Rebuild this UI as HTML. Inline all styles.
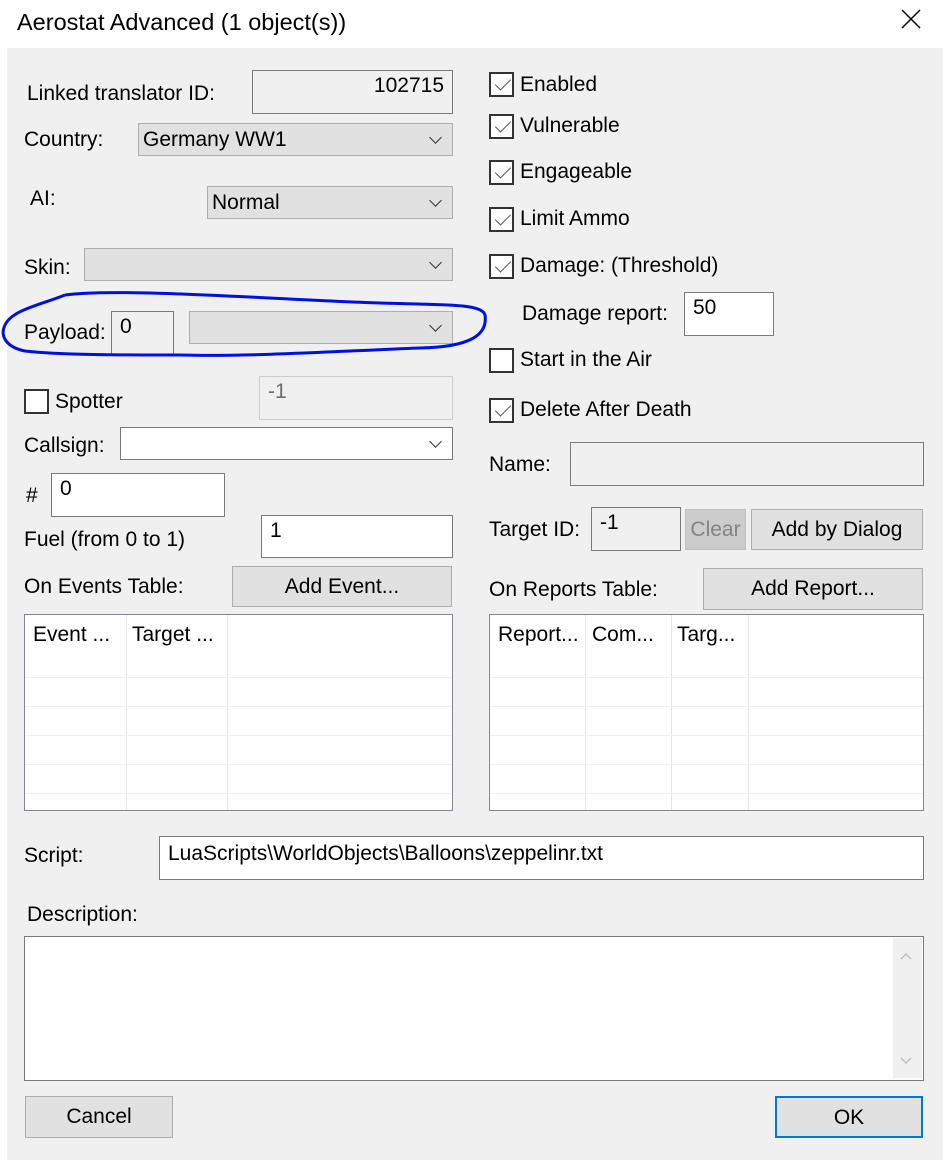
<!DOCTYPE html>
<html><head><meta charset="utf-8"><style>
*{box-sizing:border-box;margin:0;padding:0}
body{width:943px;height:1160px;background:#fff;position:relative;overflow:hidden;font-family:"Liberation Sans",sans-serif;font-size:21px;color:#000}
.p{position:absolute;left:7px;top:48px;width:936px;height:1112px;background:#f0f0f0}
.a{position:absolute}
.l{position:absolute;white-space:nowrap;line-height:24px}
.in{position:absolute;border:1px solid #7a7a7a;background:#fff;padding:4px 8px;line-height:22px}
.cb{position:absolute;border:1px solid #adadad;background:#e1e1e1;padding:1px 4px 0;line-height:30px}
.cb:after{content:"";position:absolute;right:12px;top:9px;width:8px;height:8px;border-right:1.5px solid #333;border-bottom:1.5px solid #333;transform:rotate(45deg)}
.btn{position:absolute;border:1px solid #adadad;background:#e1e1e1;text-align:center;line-height:40px}
.ck{position:absolute;left:489px;width:25px;height:25px;border:2px solid #333;background:#fff}
.ck.on:after{content:"";position:absolute;left:8px;top:1px;width:7px;height:14px;border-right:1.5px solid #555;border-bottom:1.5px solid #555;transform:rotate(45deg)}
.tbl{position:absolute;border:1px solid #828790;background:#fff}
.vl{position:absolute;top:0;bottom:0;width:1px;background:#e5e5e5}
.hl{position:absolute;left:0;right:0;height:1px;background:#f0f0f0}
</style></head><body>
<div class="l" style="left:17px;top:8px;font-size:23.5px;line-height:28px">Aerostat Advanced (1 object(s))</div>
<svg class="a" style="left:900px;top:8px" width="22" height="22"><path d="M2 2L20 20M20 2L2 20" stroke="#000" stroke-width="1.5"/></svg>
<div class="p"></div>

<div class="l" style="left:27px;top:82px">Linked translator ID:</div>
<div class="in" style="left:252px;top:70px;width:201px;height:44px;background:#f0f0f0;text-align:right">102715</div>
<div class="l" style="left:24px;top:128px">Country:</div>
<div class="cb" style="left:138px;top:123px;width:315px;height:33px">Germany WW1</div>
<div class="l" style="left:30px;top:187px">AI:</div>
<div class="cb" style="left:207px;top:186px;width:246px;height:33px">Normal</div>
<div class="l" style="left:24px;top:256px">Skin:</div>
<div class="cb" style="left:84px;top:248px;width:369px;height:33px"></div>
<div class="l" style="left:24px;top:321px">Payload:</div>
<div class="in" style="left:111px;top:311px;width:63px;height:44px;background:#f0f0f0;padding-left:8px">0</div>
<div class="cb" style="left:189px;top:311px;width:264px;height:33px"></div>
<svg class="a" style="left:0;top:285px" width="490" height="80"><path d="M65 10 C120 2 300 16 380 18 C440 20 482 18 485 30 C488 50 470 62 420 63 C340 66 250 72 180 70 C120 70 60 70 25 66 C5 62 0 50 5 40 C12 25 40 20 65 10" fill="none" stroke="#0010e0" stroke-width="3"/></svg>

<div class="ck" style="left:24px;top:389px"></div>
<div class="l" style="left:55px;top:390px">Spotter</div>
<div class="in" style="left:259px;top:376px;width:194px;height:44px;background:#f0f0f0;border-color:#ccc;color:#6d6d6d">-1</div>
<div class="l" style="left:24px;top:434px">Callsign:</div>
<div class="cb" style="left:120px;top:427px;width:333px;height:33px;background:#fff;border-color:#7a7a7a"></div>
<div class="l" style="left:26px;top:484px">#</div>
<div class="in" style="left:51px;top:473px;width:174px;height:44px">0</div>
<div class="l" style="left:24px;top:528px">Fuel (from 0 to 1)</div>
<div class="in" style="left:261px;top:515px;width:192px;height:43px">1</div>
<div class="l" style="left:24px;top:575px">On Events Table:</div>
<div class="btn" style="left:232px;top:566px;width:220px;height:41px">Add Event...</div>
<div class="tbl" style="left:24px;top:614px;width:429px;height:197px">
<div class="vl" style="left:101px"></div><div class="vl" style="left:202px"></div>
<div class="l" style="left:8px;top:8px">Event ...</div><div class="l" style="left:107px;top:8px">Target ...</div>
<div class="hl" style="top:62px"></div><div class="hl" style="top:91px"></div><div class="hl" style="top:120px"></div><div class="hl" style="top:149px"></div><div class="hl" style="top:178px"></div>
</div>

<div class="ck on" style="top:72px"></div><div class="l" style="left:520px;top:73px">Enabled</div>
<div class="ck on" style="top:114px"></div><div class="l" style="left:520px;top:114px">Vulnerable</div>
<div class="ck on" style="top:160px"></div><div class="l" style="left:520px;top:160px">Engageable</div>
<div class="ck on" style="top:207px"></div><div class="l" style="left:520px;top:207px">Limit Ammo</div>
<div class="ck on" style="top:254px"></div><div class="l" style="left:520px;top:254px">Damage: (Threshold)</div>
<div class="l" style="left:522px;top:302px">Damage report:</div>
<div class="in" style="left:684px;top:292px;width:90px;height:44px">50</div>
<div class="ck" style="top:348px"></div><div class="l" style="left:520px;top:348px">Start in the Air</div>
<div class="ck on" style="top:398px"></div><div class="l" style="left:520px;top:398px">Delete After Death</div>
<div class="l" style="left:489px;top:453px">Name:</div>
<div class="in" style="left:570px;top:442px;width:354px;height:44px;background:#f0f0f0"></div>
<div class="l" style="left:489px;top:518px">Target ID:</div>
<div class="in" style="left:591px;top:507px;width:90px;height:44px;background:#f0f0f0">-1</div>
<div class="btn" style="left:685px;top:509px;width:61px;height:41px;background:#ccc;border-color:#bfbfbf;color:#838383">Clear</div>
<div class="btn" style="left:751px;top:509px;width:172px;height:41px">Add by Dialog</div>
<div class="l" style="left:489px;top:578px">On Reports Table:</div>
<div class="btn" style="left:703px;top:568px;width:220px;height:42px">Add Report...</div>
<div class="tbl" style="left:489px;top:614px;width:435px;height:197px">
<div class="vl" style="left:95px"></div><div class="vl" style="left:181px"></div><div class="vl" style="left:258px"></div>
<div class="l" style="left:8px;top:8px">Report...</div><div class="l" style="left:102px;top:8px">Com...</div><div class="l" style="left:187px;top:8px">Targ...</div>
<div class="hl" style="top:62px"></div><div class="hl" style="top:91px"></div><div class="hl" style="top:120px"></div><div class="hl" style="top:149px"></div><div class="hl" style="top:178px"></div>
</div>

<div class="l" style="left:24px;top:844px">Script:</div>
<div class="in" style="left:159px;top:836px;width:765px;height:44px;padding-top:6px">LuaScripts\WorldObjects\Balloons\zeppelinr.txt</div>
<div class="l" style="left:27px;top:903px">Description:</div>
<div class="in" style="left:24px;top:936px;width:900px;height:145px"></div>
<div class="a" style="left:893px;top:938px;width:29px;height:140px;background:#f0f0f0"></div>
<svg class="a" style="left:898px;top:950px" width="16" height="120"><path d="M3 9L8 4L13 9M3 108L8 113L13 108" fill="none" stroke="#bbb" stroke-width="1.3"/></svg>
<div class="btn" style="left:25px;top:1096px;width:148px;height:42px">Cancel</div>
<div class="btn" style="left:775px;top:1096px;width:148px;height:42px;border:2px solid #0078d7">OK</div>
</body></html>
